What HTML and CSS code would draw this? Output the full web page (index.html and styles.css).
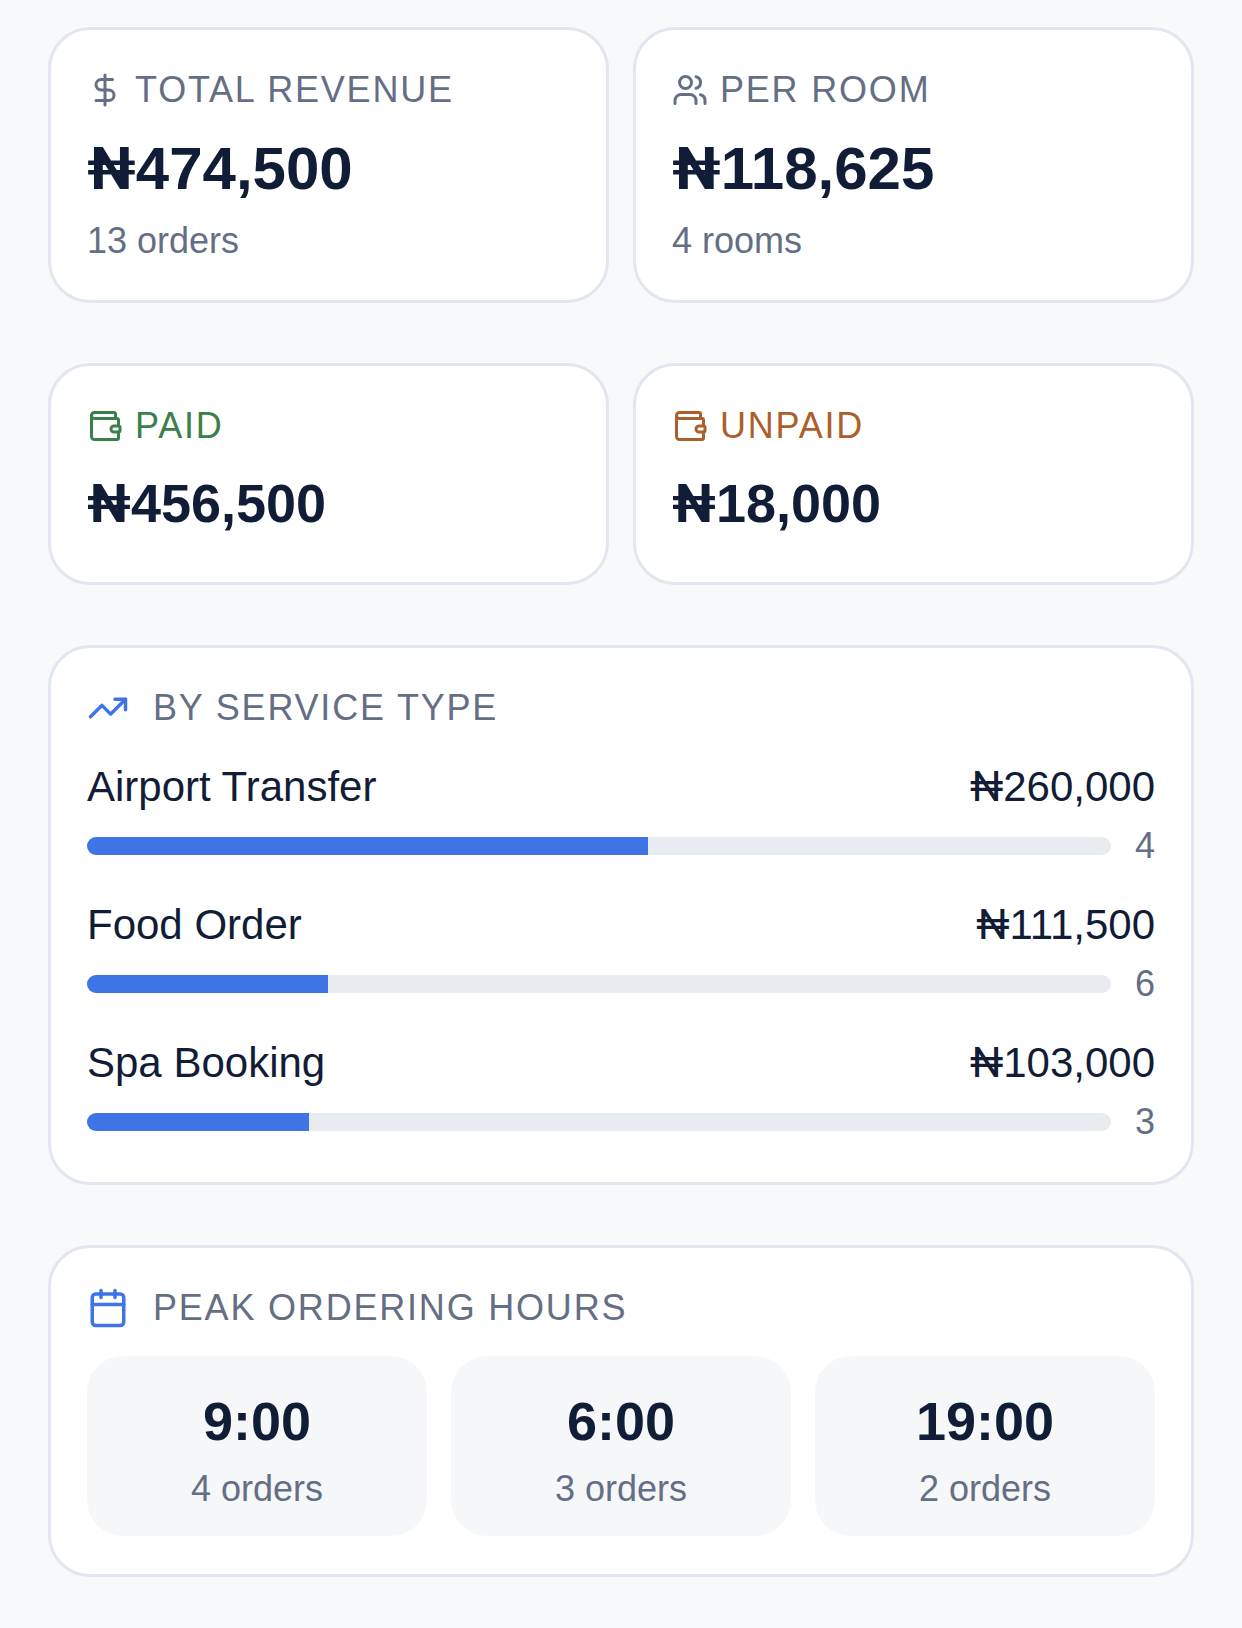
FILE: index.html
```html
<!DOCTYPE html>
<html lang="en">
<head>
<meta charset="utf-8">
<title>Revenue</title>
<link rel="stylesheet" href="styles.css">
</head>
<body>
<main class="page">
  <div class="pair pair-top">
    <section class="card stat">
      <div class="label"><svg class="ico" viewBox="0 0 24 24"><path d="M12 2v20M17 5H9.500a3.500 3.500 0 0 0 0 7h5a3.500 3.500 0 0 1 0 7H6"/></svg><span>TOTAL REVENUE</span></div>
      <div class="value value-lg"><span class="naira">₦</span>474,500</div>
      <div class="sub">13 orders</div>
    </section>
    <section class="card stat">
      <div class="label"><svg class="ico" viewBox="0 0 24 24"><path d="M16 21v-2a4 4 0 0 0-4-4H6a4 4 0 0 0-4 4v2"/><circle cx="9" cy="7" r="4"/><path d="M22 21v-2a4 4 0 0 0-3-3.870M16 3.130a4 4 0 0 1 0 7.750"/></svg><span>PER ROOM</span></div>
      <div class="value value-lg"><span class="naira">₦</span>118,625</div>
      <div class="sub">4 rooms</div>
    </section>
  </div>
  <div class="pair">
    <section class="card stat stat-short">
      <div class="label paid"><svg class="ico" viewBox="0 0 24 24"><path d="M19 7V4a1 1 0 0 0-1-1H5a2 2 0 0 0 0 4h15a1 1 0 0 1 1 1v4h-3a2 2 0 0 0 0 4h3a1 1 0 0 0 1-1v-2a1 1 0 0 0-1-1"/><path d="M3 5v14a2 2 0 0 0 2 2h15a1 1 0 0 0 1-1v-4"/></svg><span>PAID</span></div>
      <div class="value"><span class="naira">₦</span>456,500</div>
    </section>
    <section class="card stat stat-short">
      <div class="label unpaid"><svg class="ico" viewBox="0 0 24 24"><path d="M19 7V4a1 1 0 0 0-1-1H5a2 2 0 0 0 0 4h15a1 1 0 0 1 1 1v4h-3a2 2 0 0 0 0 4h3a1 1 0 0 0 1-1v-2a1 1 0 0 0-1-1"/><path d="M3 5v14a2 2 0 0 0 2 2h15a1 1 0 0 0 1-1v-4"/></svg><span>UNPAID</span></div>
      <div class="value"><span class="naira">₦</span>18,000</div>
    </section>
  </div>
  <section class="card panel">
    <div class="label head"><svg class="ico ico-blue" viewBox="0 0 24 24"><path d="M22 7l-8.500 8.500-5-5L2 17"/><path d="M16 7h6v6"/></svg><span>BY SERVICE TYPE</span></div>
    <div class="rows">
      <div class="row">
        <div class="row-top"><span>Airport Transfer</span><span><span class="naira">₦</span>260,000</span></div>
        <div class="row-bar"><div class="track"><div class="fill" style="width:54.8%"></div></div><span class="count">4</span></div>
      </div>
      <div class="row">
        <div class="row-top"><span>Food Order</span><span><span class="naira">₦</span>111,500</span></div>
        <div class="row-bar"><div class="track"><div class="fill" style="width:23.5%"></div></div><span class="count">6</span></div>
      </div>
      <div class="row">
        <div class="row-top"><span>Spa Booking</span><span><span class="naira">₦</span>103,000</span></div>
        <div class="row-bar"><div class="track"><div class="fill" style="width:21.7%"></div></div><span class="count">3</span></div>
      </div>
    </div>
  </section>
  <section class="card panel">
    <div class="label head"><svg class="ico ico-blue" viewBox="0 0 24 24"><path d="M8 2v4M16 2v4"/><rect x="3" y="4" width="18" height="18" rx="2"/><path d="M3 10h18"/></svg><span>PEAK ORDERING HOURS</span></div>
    <div class="tiles">
      <div class="tile"><div class="tile-value">9:00</div><div class="sub tile-sub">4 orders</div></div>
      <div class="tile"><div class="tile-value">6:00</div><div class="sub tile-sub">3 orders</div></div>
      <div class="tile"><div class="tile-value">19:00</div><div class="sub tile-sub">2 orders</div></div>
    </div>
  </section>
</main>
</body>
</html>
```
FILE: styles.css
```css
* { box-sizing: border-box; }
html, body { margin: 0; padding: 0; }
body {
  background: #f8f9fb;
  color: #111c36;
  font-family: "Liberation Sans", "DejaVu Sans", sans-serif;
}
.naira { font-family: Roboto, "Liberation Sans", sans-serif; }
.page { padding: 27px 48px 54px; display: flex; flex-direction: column; }
.pair { display: grid; grid-template-columns: 1fr 1fr; gap: 24px; margin-bottom: 60px; }
.card { background: #fff; border: 3px solid #e2e6ee; border-radius: 42px; }
.stat { padding: 36px; height: 276px; }
.stat-short { height: 222px; }
.label {
  display: flex; align-items: center; gap: 12px;
  font-size: 36px; line-height: 48px; letter-spacing: 1.8px; color: #646e84;
}
.label.paid { color: #3b8048; }
.label.unpaid { color: #ad5f2b; }
.ico { width: 36px; height: 36px; fill: none; stroke: currentColor; stroke-width: 2; stroke-linecap: round; stroke-linejoin: round; flex: none; }
.ico-blue { color: #3f74e6; width: 42px; height: 42px; }
.value { font-size: 54px; line-height: 72px; font-weight: 700; margin-top: 17px; }
.value-lg { font-size: 60px; line-height: 80px; margin-top: 15px; }
.sub { font-size: 36px; line-height: 44px; color: #646e84; margin-top: 10px; }
.panel { padding: 36px 36px 38px; margin-bottom: 60px; }
.head { gap: 24px; }
.rows { display: flex; flex-direction: column; gap: 29px; margin-top: 27px; }
.row-top { display: flex; justify-content: space-between; font-size: 42px; line-height: 56px; }
.row-bar { display: flex; align-items: center; gap: 24px; margin-top: 9px; height: 44px; }
.track { flex: 1; height: 18px; border-radius: 9px; background: #e8ebf0; overflow: hidden; }
.fill { height: 100%; background: #3f74e6; }
.count { font-size: 36px; color: #646e84; }
.tiles { display: grid; grid-template-columns: repeat(3, 1fr); gap: 24px; margin-top: 24px; }
.tile { background: #f5f7f9; border-radius: 36px; height: 180px; padding-top: 32px; text-align: center; }
.tile-value { font-size: 54px; line-height: 66px; font-weight: 700; }
.tile-sub { margin-top: 13px; }
```
